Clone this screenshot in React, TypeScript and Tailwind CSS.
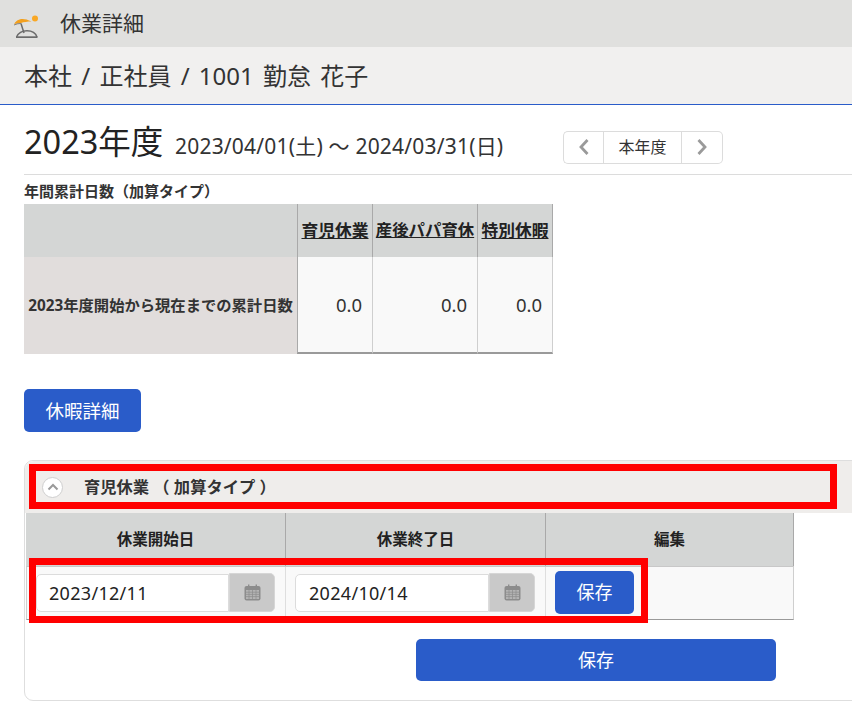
import React from "react";

const FONT = "font-['Noto_Sans','Noto_Sans_CJK_JP',sans-serif]";

const BeachIcon = () => (
  <svg width="28" height="28" viewBox="0 0 28 28" className="shrink-0">
    <circle cx="22" cy="8.5" r="3" fill="#f9a825" />
    <path d="M1 14.5 C3 9.5 9 6.5 18.5 11.5 C14 11.5 11 12 8 13 C5.5 13 3 13.5 1 14.5 Z" fill="#f2a01e" />
    <path d="M1 15 C3 14 5.5 13.5 8 13.4" stroke="#6b6b6b" strokeWidth="0.8" fill="none" />
    <path d="M8 13.5 L11 23" stroke="#6b6b6b" strokeWidth="1.5" fill="none" />
    <path d="M3.5 27 C5.5 22.5 9.5 20.7 14 20.7 C18.5 20.7 22.5 22.5 24 27" fill="none" stroke="#6b6b6b" strokeWidth="1.4" />
    <path d="M3 27.2 H24.5" stroke="#6b6b6b" strokeWidth="1.8" />
  </svg>
);

const CalendarIcon = () => (
  <svg width="17" height="17" viewBox="0 0 17 17">
    <rect x="0.5" y="2" width="16" height="14.5" rx="2" fill="#8c8c8c" />
    <rect x="4" y="0.5" width="1.4" height="3" fill="#8c8c8c" />
    <rect x="11.6" y="0.5" width="1.4" height="3" fill="#8c8c8c" />
    <rect x="2" y="6" width="13" height="9" fill="#b4b4b4" />
    <path d="M2 8.2 H15 M2 10.4 H15 M2 12.6 H15 M5 6 V15 M8.5 6 V15 M12 6 V15" stroke="#8c8c8c" strokeWidth="0.7" />
  </svg>
);

const Chevron = ({ dir }: { dir: "left" | "right" }) => (
  <svg width="12" height="18" viewBox="0 0 12 18">
    <path
      d={dir === "left" ? "M9.5 2 L3 9 L9.5 16" : "M2.5 2 L9 9 L2.5 16"}
      fill="none"
      stroke="#9a9a9a"
      strokeWidth="2.8"
    />
  </svg>
);

const DateField = ({ value, inputClass }: { value: string; inputClass: string }) => (
  <div className="-mt-[1px] flex h-[39px] items-center">
    <div className={`${inputClass} mt-[1px] flex h-[38px] items-center rounded-l-[5px] border border-[#dcdcdc] bg-white text-[18px] tracking-[0.3px] text-[#222]`}>
      {value}
    </div>
    <div className="flex h-[39px] w-[46px] items-center justify-center rounded-r-[5px] border border-[#d6d6d6] bg-[#c9c9c9]">
      <CalendarIcon />
    </div>
  </div>
);

export default function App() {
  const leaveColumns = [
    { label: "育児休業", width: "w-[75px]", text: "text-[16.75px]" },
    { label: "産後パパ育休", width: "w-[105px]", text: "text-[16.4px]" },
    { label: "特別休暇", width: "w-[76px]", text: "text-[16.75px]" },
  ];

  return (
    <div className={`${FONT} h-[715px] w-[852px] overflow-hidden bg-white text-[#333]`}>
      <div className="flex h-[47px] items-center gap-[19px] bg-[#e0e0de] pl-[13px]">
        <BeachIcon />
        <div className="text-[21px] leading-none">休業詳細</div>
      </div>
      <div className="flex h-[58px] items-center border-b border-[#2a5cc9] bg-[#f1f0ef] pl-[24px] text-[24px] text-[#333] [word-spacing:3px]">
        本社 / 正社員 / 1001 勤怠 花子
      </div>

      <div className="ml-[24px] flex h-[70px] items-center border-b border-[#dcdcdc] pt-[6px]">
        <div className="w-[151px] text-[32.5px] leading-none text-[#222]">2023年度</div>
        <div className="w-[388px] pt-[8px] text-[21px] leading-none tracking-[0.2px] text-[#333]">
          2023/04/01(土) ～ 2024/03/31(日)
        </div>
        <div className="mt-[9px] flex h-[33px] items-stretch">
          <div className="flex w-[40px] items-center justify-center rounded-l-[5px] border border-r-0 border-[#dcdcdc]">
            <Chevron dir="left" />
          </div>
          <div className="flex w-[79px] items-center justify-center border border-[#dcdcdc] text-[16px] text-[#333]">
            本年度
          </div>
          <div className="flex w-[41px] items-center justify-center rounded-r-[5px] border border-l-0 border-[#dcdcdc]">
            <Chevron dir="right" />
          </div>
        </div>
      </div>

      <div className="ml-[24px] mt-[5px] h-[24px] text-[15px] font-bold leading-[22px] text-[#333]">
        年間累計日数（加算タイプ）
      </div>

      <div className="ml-[24px] flex w-fit flex-col">
        <div className="flex h-[53px] bg-[#d4d6d5]">
          <div className="w-[273px]" />
          {leaveColumns.map((c) => (
            <div
              key={c.label}
              className={`${c.width} ${c.text} flex items-center justify-center whitespace-nowrap border-l border-[#a9a9a9] font-bold text-[#222] underline last:border-r`}
            >
              {c.label}
            </div>
          ))}
        </div>
        <div className="flex h-[97px]">
          <div className="flex w-[273px] items-center justify-center whitespace-nowrap bg-[#e1dddc] text-[15.3px] font-bold text-[#333]">
            2023年度開始から現在までの累計日数
          </div>
          {leaveColumns.map((c, i) => (
            <div
              key={c.label}
              className={`${c.width} flex items-center justify-end border-b-2 border-b-[#9a9a9a] bg-[#f9f9f9] pr-[10px] text-[18.5px] text-[#333] ${
                i === 0 ? "border-l border-l-[#a9a9a9]" : "border-l border-l-[#cfcfcf]"
              } last:border-r last:border-r-[#cfcfcf]`}
            >
              0.0
            </div>
          ))}
        </div>
      </div>

      <div className="ml-[24px] mt-[35px] flex h-[43px] w-[117px] items-center justify-center rounded-[5px] bg-[#2a5cc9] text-[18.5px] text-white">
        休暇詳細
      </div>

      <div className="relative ml-[24px] mt-[28px] h-[241px] w-[900px] rounded-[9px] border border-[#dedede]">
        <div className="flex h-[52px] items-center rounded-t-[9px] bg-[#efedeb] pl-[17px]">
          <div className="flex h-[21px] w-[21px] items-center justify-center rounded-full border border-[#cfcfcf] bg-white">
            <svg width="12" height="8" viewBox="0 0 12 8">
              <path d="M1.5 6.5 L6 2 L10.5 6.5" fill="none" stroke="#9a9a9a" strokeWidth="2" />
            </svg>
          </div>
          <div className="ml-[21px] whitespace-pre text-[16.3px] font-bold text-[#333]">育児休業 （ 加算タイプ ）</div>
        </div>

        <div className="ml-[1px] w-[768px]">
          <div className="flex h-[53px] bg-[#d4d6d5] text-[15.5px] font-bold text-[#222]">
            <div className="flex w-[260px] items-center justify-center border-r border-[#a9a9a9]">休業開始日</div>
            <div className="flex w-[260px] items-center justify-center border-r border-[#a9a9a9]">休業終了日</div>
            <div className="flex flex-1 items-center justify-center border-r border-[#a9a9a9]">編集</div>
          </div>
          <div className="flex h-[54px] items-center border-b border-b-[#9a9a9a] border-l border-l-[#cfcfcf] border-r border-r-[#cfcfcf] border-t border-t-[#c8c8c8] bg-[#f9f9f9]">
            <div className="flex h-full w-[259px] items-center border-r border-[#dedede] pl-[9px]">
              <DateField value="2023/12/11" inputClass="w-[193px] pl-[12px]" />
            </div>
            <div className="flex h-full w-[260px] items-center border-r border-[#dedede] pl-[9px]">
              <DateField value="2024/10/14" inputClass="w-[194px] pl-[13px]" />
            </div>
            <div className="-mt-[2px] pl-[9px]">
              <div className="flex h-[43px] w-[79px] items-center justify-center rounded-[5px] bg-[#2a5cc9] text-[18px] text-white">
                保存
              </div>
            </div>
          </div>
        </div>

        <div className="ml-[391px] mt-[19px] flex h-[42px] w-[360px] items-center justify-center rounded-[5px] bg-[#2a5cc9] text-[18px] text-white">
          保存
        </div>

        <div className="absolute left-[4px] top-[3px] h-[45px] w-[808px] border-[7px] border-[#ff0000]" />
        <div className="absolute left-[4px] top-[97px] h-[65px] w-[619px] border-[7px] border-[#ff0000]" />
      </div>
    </div>
  );
}
